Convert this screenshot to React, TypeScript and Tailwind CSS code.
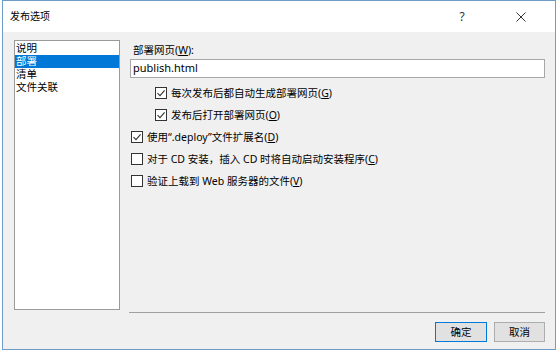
import React from 'react';

const items = ['说明', '部署', '清单', '文件关联'];

function Box({ checked }: { checked: boolean }) {
  return (
    <span className="w-[12px] h-[12px] border border-[#333333] bg-white flex items-center justify-center shrink-0">
      {checked && (
        <svg width="10" height="10" viewBox="0 0 10 10">
          <path d="M1.5 5.2 L4 7.6 L8.6 2.4" fill="none" stroke="#333333" strokeWidth="1.1" />
        </svg>
      )}
    </span>
  );
}

function Check({ checked, indent, children }: { checked: boolean; indent?: boolean; children: React.ReactNode }) {
  return (
    <div className={indent ? 'flex items-center h-[14px] pl-[25px] gap-[4px]' : 'flex items-center h-[14px] pl-[1px] gap-[4px]'}>
      <Box checked={checked} />
      <span className="leading-[14px] whitespace-nowrap">{children}</span>
    </div>
  );
}

export default function App() {
  return (
    <div className="w-[558px] h-[354px] bg-white text-black text-[10.5px] font-['Noto_Sans','Noto_Sans_CJK_SC',sans-serif]">
      <div className="ml-[2px] w-[554px] h-[350px] border border-[#6e9bc7] flex flex-col">
        {/* title bar */}
        <div className="h-[31px] bg-white flex items-center pl-[7px]">
          <span className="flex-1 text-[10px]">发布选项</span>
          <span className="w-[20px] text-center text-[12px] text-[#333]">?</span>
          <span className="ml-[44px] mr-[29px] flex items-center">
            <svg width="10" height="10" viewBox="0 0 10 10">
              <path d="M0.5 0.5 L9.5 9.5 M9.5 0.5 L0.5 9.5" stroke="#333333" strokeWidth="1" />
            </svg>
          </span>
        </div>

        {/* body */}
        <div className="flex-1 bg-[#f0f0f0] flex flex-col pl-[11px] pr-[10px] pt-[8px]">
          <div className="flex gap-[10px] h-[270px]">
            <div className="w-[106px] h-[270px] bg-white border border-[#9a9a9a] pt-[1px]">
              {items.map((it) => (
                <div
                  key={it}
                  className={
                    it === '部署'
                      ? 'h-[13px] leading-[13px] pl-[1px] bg-[#0078d7] text-white overflow-hidden'
                      : 'h-[13px] leading-[13px] pl-[1px] overflow-hidden'
                  }
                >
                  {it}
                </div>
              ))}
            </div>

            <div className="flex-1 flex flex-col pt-[3px]">
              <div className="h-[14px] leading-[14px] pl-[3px]">
                部署网页(<span className="underline">W</span>):
              </div>
              <div className="mt-[2px] h-[19px] bg-white border border-[#a8a8a8] flex items-center pl-[2px] text-[11px]">
                publish.html
              </div>
              <div className="mt-[8px] flex flex-col gap-[8px]">
                <Check checked indent>
                  每次发布后都自动生成部署网页(<span className="underline">G</span>)
                </Check>
                <Check checked indent>
                  发布后打开部署网页(<span className="underline">O</span>)
                </Check>
                <Check checked>
                  使用“.deploy”文件扩展名(<span className="underline">D</span>)
                </Check>
                <Check checked={false}>
                  对于 CD 安装，插入 CD 时将自动启动安装程序(<span className="underline">C</span>)
                </Check>
                <Check checked={false}>
                  验证上载到 Web 服务器的文件(<span className="underline">V</span>)
                </Check>
              </div>
            </div>
          </div>

          <div className="ml-[115px] mt-[2px] h-[1px] bg-[#a0a0a0]" />

          <div className="mt-[9px] flex justify-end gap-[7px]">
            <button className="w-[52px] h-[20px] bg-[#e1e1e1] border border-[#0078d7] text-[10.5px] leading-[18px]">
              确定
            </button>
            <button className="w-[51px] h-[20px] bg-[#e1e1e1] border border-[#adadad] text-[10.5px] leading-[18px]">
              取消
            </button>
          </div>
        </div>
      </div>
    </div>
  );
}
